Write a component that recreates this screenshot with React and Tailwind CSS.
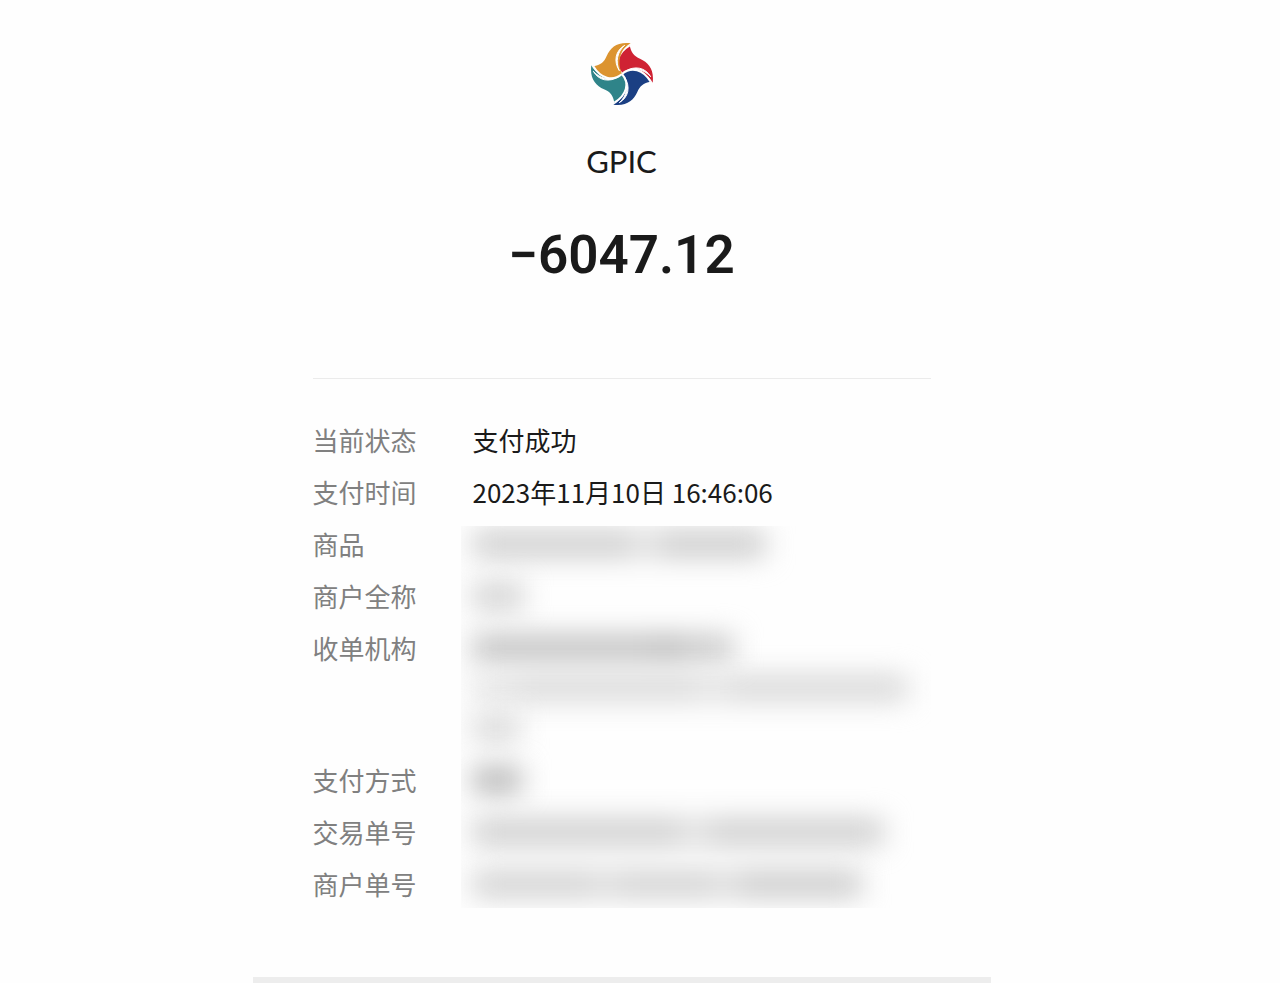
const BLADES = [
  { color: "#cf2233", turn: "rotate(0)" },
  { color: "#1b3f83", turn: "rotate(90)" },
  { color: "#2f8489", turn: "rotate(180)" },
  { color: "#dc9430", turn: "rotate(270)" },
];

const details = [
  { label: "当前状态", value: "支付成功" },
  { label: "支付时间", value: "2023年11月10日 16:46:06" },
];

// Each hidden line is a list of smudges: [width, gray level]
const hiddenDetails = [
  { label: "商品", lines: [[[160, 200], [26, 222], [106, 198]]] },
  { label: "商户全称", lines: [[[50, 204]]] },
  {
    label: "收单机构",
    lines: [
      [[180, 186], [30, 178], [50, 194]],
      [[44, 224], [180, 214], [32, 224], [178, 212]],
      [[46, 212]],
    ],
  },
  { label: "支付方式", lines: [[[48, 174]]] },
  { label: "交易单号", lines: [[[208, 200], [28, 220], [174, 200]]] },
  {
    label: "商户单号",
    lines: [[[120, 204], [24, 216], [96, 204], [26, 216], [122, 197]]],
  },
];

function Logo() {
  return (
    <svg
      viewBox="-96 -96 192 192"
      className="size-16"
      role="img"
      aria-label="GPIC"
    >
      {BLADES.map((blade) => (
        <g key={blade.color} transform={blade.turn}>
          <path
            d="M0 0C-24-28-14-64 23-86C27-64 36-53 54-46C80-34 97-14 92 26C74-8 32-15 0 0Z"
            fill={blade.color}
          />
          <path
            d="M10-8C38-26 70-20 86 8C66-15 36-20 10-8Z"
            fill="#fefefe"
            stroke="#fefefe"
            strokeWidth="3"
          />
          <path
            d="M0 0C-24-28-14-64 23-86"
            fill="none"
            stroke="#fefefe"
            strokeWidth="6"
          />
        </g>
      ))}
    </svg>
  );
}

function HiddenLine({ smudges }) {
  return (
    <div className="flex h-9 items-center blur-[14px]">
      {smudges.map(([width, gray], i) => (
        <span
          key={i}
          className="h-6"
          style={{ width, backgroundColor: `rgb(${gray} ${gray} ${gray})` }}
        />
      ))}
    </div>
  );
}

export default function App() {
  return (
    <div className="min-h-screen bg-[#fefefe] pr-[37px] font-['Noto_Sans_CJK_SC',sans-serif] text-[#1a1a1a]">
      <main className="mx-auto max-w-[738px]">
        <div className="px-[60px]">
          <header className="flex flex-col items-center border-b border-[#ebebeb] pt-[42px] pb-[91px]">
            <Logo />
            <h1 className="mt-[35px] font-['Lato',sans-serif] text-[31px] leading-10">
              GPIC
            </h1>
            <p className="mt-[42px] font-['Roboto',sans-serif] text-[53px] leading-16 font-semibold">
              −6047.12
            </p>
          </header>

          <dl className="flex flex-col gap-4 pt-[43px] text-[26px] leading-9">
            {details.map((item) => (
              <div key={item.label} className="flex">
                <dt className="w-[148px] shrink-0 text-[#808080]">
                  {item.label}
                </dt>
                <dd className="pl-3">{item.value}</dd>
              </div>
            ))}
          </dl>

          <dl className="mt-4 flex flex-col gap-4 overflow-hidden pb-[6px] text-[26px] leading-9">
            {hiddenDetails.map((item) => (
              <div key={item.label} className="flex">
                <dt className="w-[148px] shrink-0 text-[#808080]">
                  {item.label}
                </dt>
                <dd className="flex flex-1 flex-col gap-1 overflow-x-clip pl-3">
                  {item.lines.map((smudges, i) => (
                    <HiddenLine key={i} smudges={smudges} />
                  ))}
                </dd>
              </div>
            ))}
          </dl>
        </div>
        <div className="mt-[69px] h-[6px] bg-[#ededed]" />
      </main>
    </div>
  );
}
